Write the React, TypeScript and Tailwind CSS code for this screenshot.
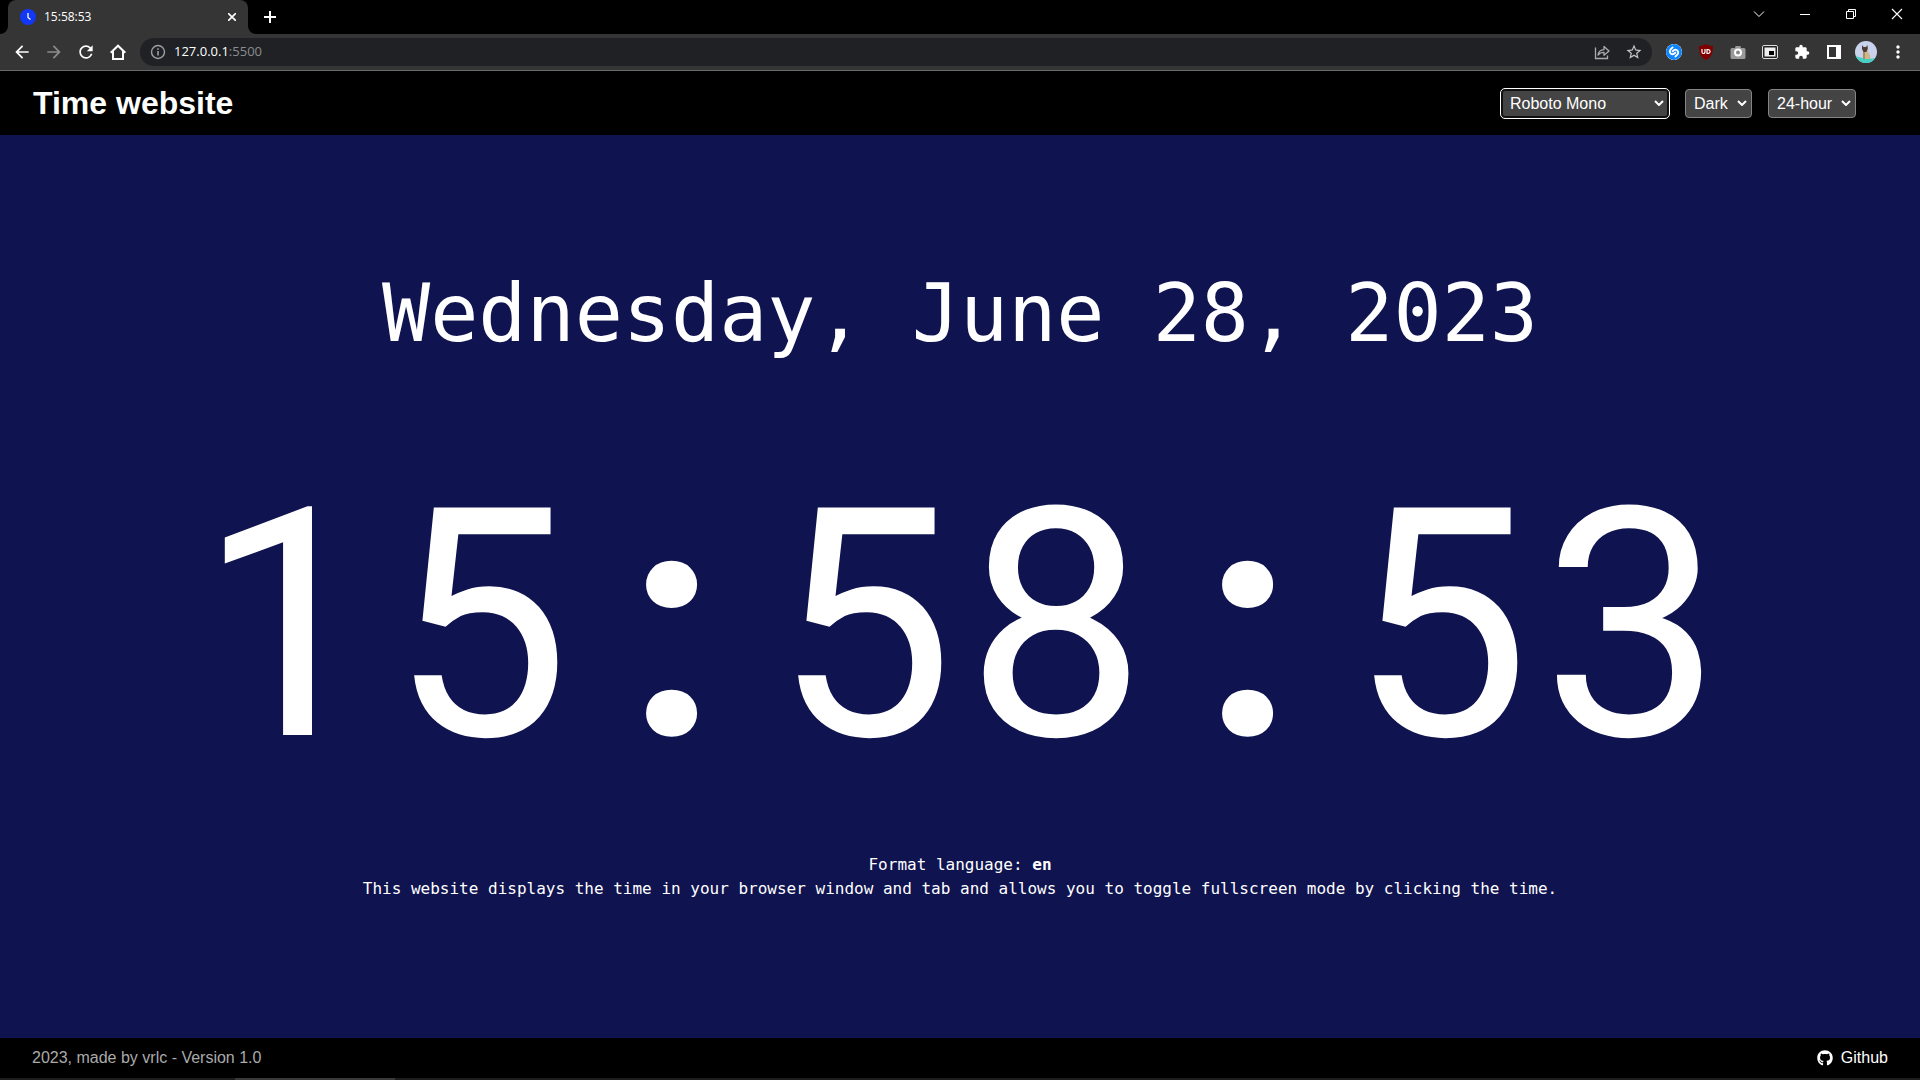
import type { ReactNode } from "react";
import { FaGithub } from "react-icons/fa";
import { SiShazam } from "react-icons/si";
import {
  MdArrowBack,
  MdArrowForward,
  MdExtension,
  MdMoreVert,
  MdRefresh,
  MdStarBorder,
} from "react-icons/md";

const time = "15:58:53";

function IconButton({ label, children }: { label: string; children: ReactNode }) {
  return (
    <button aria-label={label} className="flex h-8 w-8 shrink-0 items-center justify-center rounded-full">
      {children}
    </button>
  );
}

function WindowButton({ label, children }: { label: string; children: ReactNode }) {
  return (
    <button aria-label={label} className="flex h-7 w-[46px] items-center justify-center text-white">
      {children}
    </button>
  );
}

function TabStrip() {
  return (
    <div className="flex h-[34px] bg-black pl-2">
      <div className="relative flex w-60 items-center rounded-t-lg bg-[#353535] pr-2 pl-3 text-white">
        <svg className="absolute bottom-0 -left-2 h-2 w-2" viewBox="0 0 8 8" aria-hidden="true">
          <path d="M8 0v8H0a8 8 0 0 0 8-8z" fill="#353535" />
        </svg>
        <svg className="absolute -right-2 bottom-0 h-2 w-2" viewBox="0 0 8 8" aria-hidden="true">
          <path d="M0 0v8h8a8 8 0 0 1-8-8z" fill="#353535" />
        </svg>
        <svg className="h-4 w-4" viewBox="0 0 16 16" fill="none" aria-hidden="true">
          <circle cx="8" cy="8" r="8" fill="#1338f5" />
          <path d="M8 4v4.500l2.500 2" stroke="#fff" strokeWidth="1.300" />
        </svg>
        <span className="ml-2 flex-1 font-['Open_Sans',sans-serif] text-xs">{time}</span>
        <button aria-label="Close tab" className="flex h-4 w-4 items-center justify-center">
          <svg className="h-2 w-2" viewBox="0 0 8 8" stroke="currentColor" strokeWidth="1.600" aria-hidden="true">
            <path d="M0 0l8 8M8 0L0 8" />
          </svg>
        </button>
      </div>
      <button aria-label="New tab" className="ml-2 flex h-[34px] w-7 items-center justify-center text-white">
        <svg className="h-3 w-3" viewBox="0 0 12 12" stroke="currentColor" strokeWidth="2" aria-hidden="true">
          <path d="M6 0v12M0 6h12" />
        </svg>
      </button>
      <div className="ml-auto flex">
        <WindowButton label="Search tabs">
          <svg className="h-3 w-3" viewBox="0 0 12 12" fill="none" stroke="currentColor" aria-hidden="true">
            <path d="M1 3.500l5 5 5-5" />
          </svg>
        </WindowButton>
        <WindowButton label="Minimize">
          <svg className="h-3 w-3" viewBox="0 0 12 12" stroke="currentColor" aria-hidden="true">
            <path d="M1 6.500h10" />
          </svg>
        </WindowButton>
        <WindowButton label="Restore">
          <svg className="h-3 w-3" viewBox="0 0 12 12" fill="none" stroke="currentColor" aria-hidden="true">
            <path d="M1.500 3.500h7v7h-7zM3.500 3.500v-2h7v7h-2" />
          </svg>
        </WindowButton>
        <WindowButton label="Close window">
          <svg className="h-3 w-3" viewBox="0 0 12 12" stroke="currentColor" strokeWidth="1.100" aria-hidden="true">
            <path d="M1 1l10 10M11 1L1 11" />
          </svg>
        </WindowButton>
      </div>
    </div>
  );
}

function Toolbar() {
  return (
    <div className="flex h-[37px] items-center border-b border-[#666a6b] bg-[#353535] pr-[6px] pl-[6px] text-white">
      <IconButton label="Back">
        <MdArrowBack className="h-5 w-5" />
      </IconButton>
      <IconButton label="Forward">
        <MdArrowForward className="h-5 w-5 text-[#8c8c8c]" />
      </IconButton>
      <IconButton label="Reload">
        <MdRefresh className="h-5 w-5" />
      </IconButton>
      <IconButton label="Home">
        <svg className="h-4 w-4" viewBox="0 0 16 16" fill="none" stroke="currentColor" strokeWidth="2" aria-hidden="true">
          <path d="M.7 8.700L8 1.700l7.300 7M3 7v8h10V7" />
        </svg>
      </IconButton>
      <div className="ml-[6px] flex h-7 flex-1 items-center rounded-full bg-[#202124] pr-0.5 pl-2.5">
        <svg className="h-4 w-4 text-[#9aa0a6]" viewBox="0 0 16 16" fill="none" stroke="currentColor" aria-hidden="true">
          <circle cx="8" cy="8" r="6.500" strokeWidth="1.400" />
          <path d="M8 7v4.500M8 4.300v1.500" strokeWidth="1.600" />
        </svg>
        <a href="http://127.0.0.1:5500" className="ml-2 flex-1 font-['Open_Sans',sans-serif] text-[13px] text-white">
          127.0.0.1<span className="text-[#8a8d91]">:5500</span>
        </a>
        <IconButton label="Share">
          <svg className="h-4 w-4 text-[#a9abae]" viewBox="0 0 16 16" fill="none" stroke="currentColor" strokeWidth="1.300" aria-hidden="true">
            <path d="M1.500 3.500v11h12v-3" />
            <path d="M4 11c.5-3.500 2.500-5.200 6-5.400V2.500L15 7l-5 4.300V8.400C7.500 8.400 5.500 9 4 11z" strokeLinejoin="round" />
          </svg>
        </IconButton>
        <IconButton label="Bookmark this tab">
          <MdStarBorder className="h-[18px] w-[18px] text-[#c4c6c8]" />
        </IconButton>
      </div>
      <div className="ml-[6px] flex items-center">
        <IconButton label="Shazam">
          <SiShazam className="h-4 w-4 rounded-full bg-white text-[#0a84ff]" />
        </IconButton>
        <IconButton label="uBlock Origin">
          <svg className="h-4 w-4" viewBox="0 0 16 16" fill="none" aria-hidden="true">
            <path d="M8 0c2 1.500 4.500 2 7 2 0 6.500-1 11-7 14C2 13 1 8.500 1 2c2.500 0 5-.5 7-2z" fill="#800000" />
            <path d="M4 5v3a1.500 1.500 0 0 0 3 0V5" stroke="#fff" strokeWidth="1.200" />
            <path d="M9 5.600h1.200a1.900 1.900 0 0 1 0 3.800H9z" stroke="#fff" strokeWidth="1.200" />
          </svg>
        </IconButton>
        <IconButton label="Screenshot">
          <svg className="h-4 w-4" viewBox="0 0 16 16" fill="none" aria-hidden="true">
            <path d="M2 4h3l.5-2h5L11 4h3a1.500 1.500 0 0 1 1.500 1.500v8A1.500 1.500 0 0 1 14 15H2a1.500 1.500 0 0 1-1.500-1.500v-8A1.500 1.500 0 0 1 2 4z" fill="#999" />
            <circle cx="8" cy="8.500" r="3" fill="#888" stroke="#fff" strokeWidth="2" />
          </svg>
        </IconButton>
        <IconButton label="Picture in picture">
          <svg className="h-4 w-4" viewBox="0 0 16 16" fill="none" aria-hidden="true">
            <rect x="0.500" y="1.500" width="15" height="13" rx="1.500" fill="#222" stroke="#ddd" />
            <rect x="2.500" y="3.500" width="11" height="9" fill="#eee" />
            <rect x="7" y="7" width="5" height="4" fill="#000" />
          </svg>
        </IconButton>
        <IconButton label="Extensions">
          <MdExtension className="h-4 w-4" />
        </IconButton>
        <IconButton label="Side panel">
          <svg className="h-[14px] w-[14px]" viewBox="0 0 14 14" aria-hidden="true">
            <path d="M0 0h14v14H0zM2 2v10h7V2z" fill="#fff" fillRule="evenodd" />
          </svg>
        </IconButton>
        <IconButton label="Profile">
          <svg className="h-[22px] w-[22px]" viewBox="0 0 22 22" aria-hidden="true">
            <clipPath id="avatar">
              <circle cx="11" cy="11" r="11" />
            </clipPath>
            <g clipPath="url(#avatar)">
              <path d="M0 0h22v22H0z" fill="#c8d2ec" />
              <path d="M0 15l11 3 11-1v5H0z" fill="#45d0c4" />
              <path d="M8 9h4l3 5 .5 4H8z" fill="#cdb58c" />
              <path d="M7 4l1.500 2h2.500L12.500 4l.3 4-1.500 3H8.500L7 8z" fill="#4a3c30" />
              <path d="M8 11h2v7H8z" fill="#a58d68" />
            </g>
          </svg>
        </IconButton>
        <IconButton label="Customize and control">
          <MdMoreVert className="h-5 w-5" />
        </IconButton>
      </div>
    </div>
  );
}

function Picker({
  label,
  value,
  options,
  className,
}: {
  label: string;
  value: string;
  options: string[];
  className: string;
}) {
  return (
    <div className="relative flex items-center">
      <select
        aria-label={label}
        defaultValue={value}
        className={`h-[29px] appearance-none rounded-[4px] border bg-[#444] pt-px pl-2 text-base text-white ${className}`}
      >
        {options.map((option) => (
          <option key={option}>{option}</option>
        ))}
      </select>
      <svg
        className="pointer-events-none absolute right-[5px] h-[6px] w-[10px] text-white"
        viewBox="0 0 10 6"
        fill="none"
        stroke="currentColor"
        strokeWidth="2"
        aria-hidden="true"
      >
        <path d="M1 1l4 4 4-4" />
      </svg>
    </div>
  );
}

function SiteHeader() {
  return (
    <header className="flex h-16 items-center justify-between bg-black pr-16 pl-[33px]">
      <h1 className="text-[32px] font-bold text-white">Time website</h1>
      <form className="flex items-center gap-4">
        <Picker
          label="Font"
          value="Roboto Mono"
          options={["Roboto Mono", "Arial", "Times New Roman"]}
          className="w-[168px] border-[#101010] ring-1 ring-[#101010] outline-1 outline-white ring-inset"
        />
        <Picker label="Theme" value="Dark" options={["Dark", "Light"]} className="w-[67px] border-[#858585]" />
        <Picker
          label="Hour format"
          value="24-hour"
          options={["24-hour", "12-hour"]}
          className="w-[88px] border-[#858585]"
        />
      </form>
    </header>
  );
}

function Clock() {
  return (
    <button className="grid grid-cols-8 font-['Roboto',sans-serif] text-[320px] leading-[422px]">
      {time.split("").map((character, index) => (
        <span key={index} className={character === ":" ? "w-[0.6em] text-center font-bold" : "w-[0.6em] text-center"}>
          {character}
        </span>
      ))}
    </button>
  );
}

export default function App() {
  return (
    <div className="flex min-h-screen flex-col bg-black font-['Liberation_Sans',Arial,sans-serif]">
      <TabStrip />
      <Toolbar />
      <SiteHeader />
      <main className="flex flex-1 flex-col items-center justify-center bg-[#0f134f] pb-3 font-['DejaVu_Sans_Mono',monospace] text-white">
        <p className="text-[80px] leading-[106px]">Wednesday, June 28, 2023</p>
        <div className="mt-12 mb-4">
          <Clock />
        </div>
        <p className="text-base leading-6">
          Format language: <b>en</b>
        </p>
        <p className="text-base leading-6">
          This website displays the time in your browser window and tab and allows you to toggle fullscreen mode by clicking the time.
        </p>
      </main>
      <footer className="flex h-10 items-center justify-between bg-black px-8 text-base">
        <p className="text-[#aaa]">2023, made by vrlc - Version 1.0</p>
        <a href="https://github.com" className="flex items-center gap-2 text-white">
          <FaGithub className="h-4 w-4" />
          Github
        </a>
      </footer>
      <div className="flex h-[2px] bg-[#1e1c1c]">
        <div className="ml-[235px] w-40 bg-[#3a3838]" />
      </div>
    </div>
  );
}
